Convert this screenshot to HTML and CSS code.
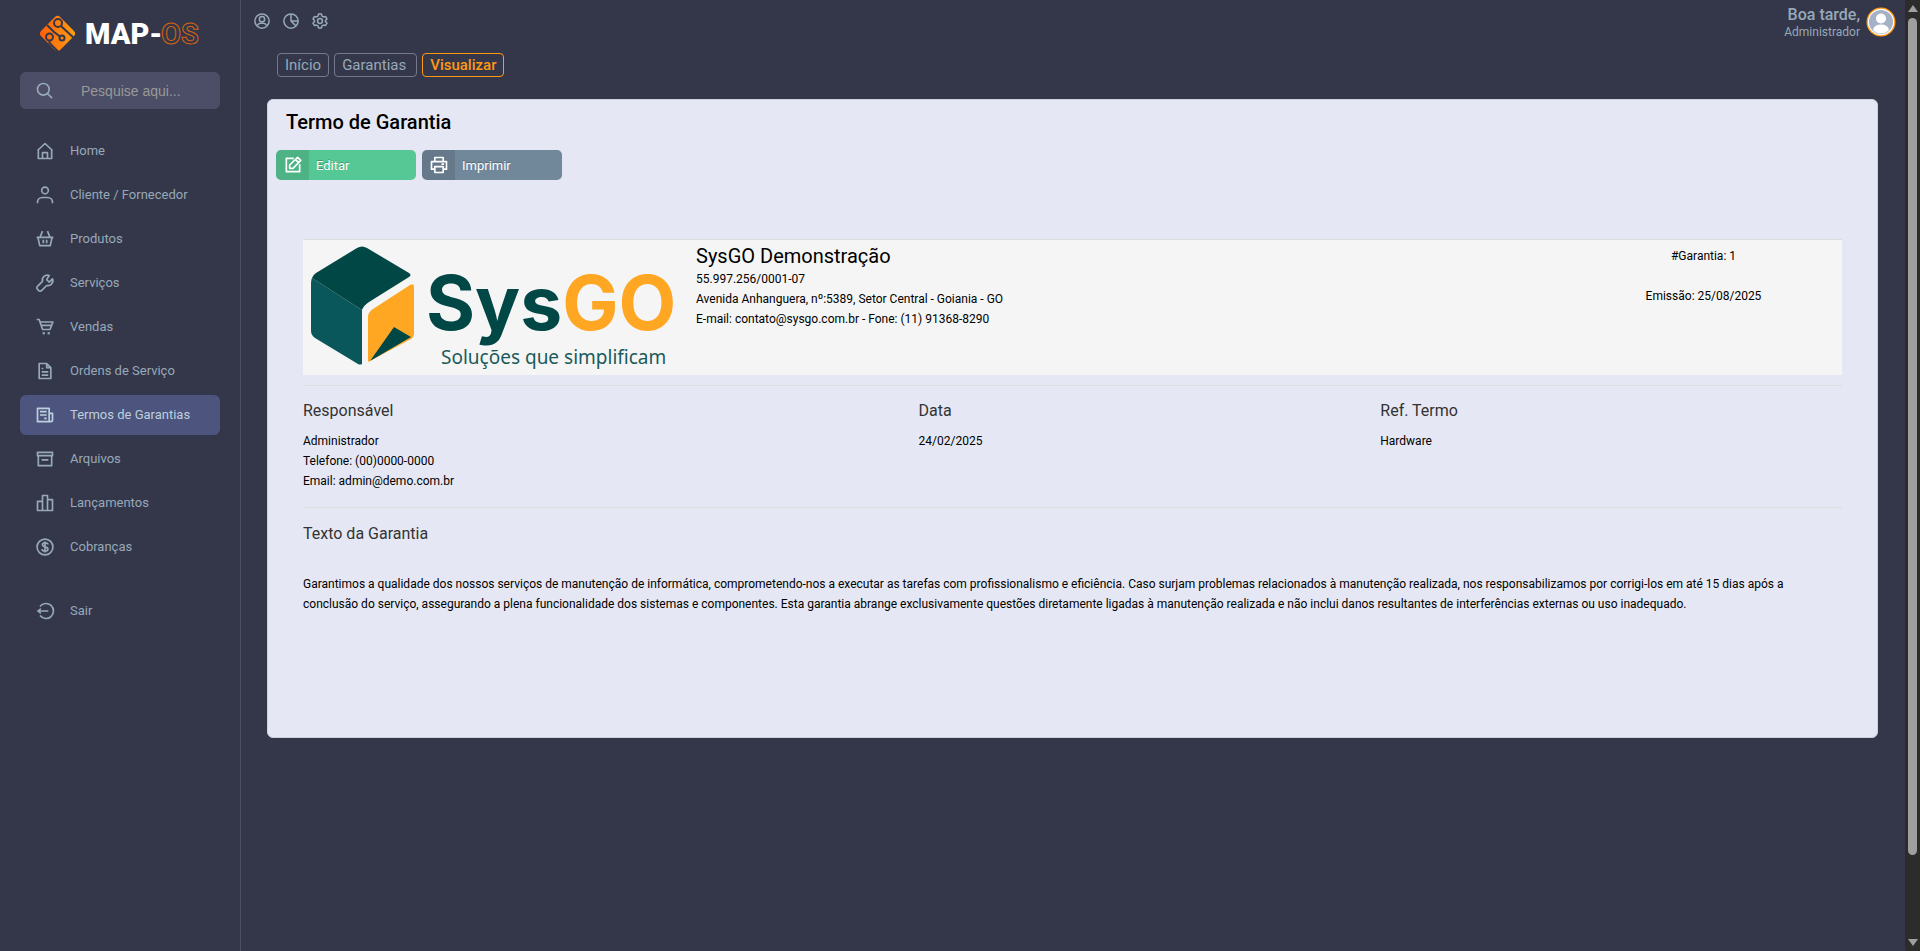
FILE: index.html
```html
<!DOCTYPE html>
<html lang="pt-BR">
<head>
<meta charset="utf-8">
<title>Map-OS - Termo de Garantia</title>
<link rel="stylesheet" href="styles.css">
</head>
<body>
<div class="app">
  <aside class="sidebar">
    <a class="brand" href="#" aria-label="Map-OS">
      <svg width="170" height="40" viewBox="0 0 170 40">
        <defs><linearGradient id="og" x1="0" y1="1" x2="1" y2="0"><stop offset="0" stop-color="#ff5c0a"/><stop offset="1" stop-color="#ffa012"/></linearGradient></defs>
        <rect x="6" y="7" width="27" height="27" rx="4" transform="rotate(45 19.500 20.500)" fill="url(#og)"/>
        <g fill="none" stroke="#34374a" stroke-width="2">
          <circle cx="20" cy="10" r="4"/><circle cx="11.500" cy="24" r="3.500"/><circle cx="24" cy="25" r="2.500"/>
          <path d="M23 13L38 27M9 12l7 7 6 4.500M11.500 28v2l9 9"/>
        </g>
        <text x="47" y="31" class="brand-map">MAP-</text>
        <text x="123" y="31" class="brand-os">OS</text>
      </svg>
    </a>
    <label class="search">
      <svg class="ico" viewBox="0 0 24 24"><circle cx="10" cy="10" r="7"/><path d="M15 15l5.500 5.500"/></svg>
      <input type="search" placeholder="Pesquise aqui..." aria-label="Pesquisar">
    </label>
    <nav class="menu">
      <a href="#"><svg class="ico" viewBox="0 0 24 24"><path d="M3 11.400L12 3l9 8.400M4 11v10h16V11M9 21v-7h6v7"/></svg>Home</a>
      <a href="#"><svg class="ico" viewBox="0 0 24 24"><circle cx="12" cy="6.500" r="4"/><path d="M3 22v-1c0-3.500 2.500-6 6-6h6c3.500 0 6 2.500 6 6v1"/></svg>Cliente / Fornecedor</a>
      <a href="#"><svg class="ico" viewBox="0 0 24 24"><path d="M2 10h20M3.500 10l2.200 10h12.600l2.200-10M6 10l3-7.500M18 10l-3-7.500M10 13v4M14 13v4"/></svg>Produtos</a>
      <a href="#"><svg class="ico" viewBox="0 0 24 24"><path d="M17 3a6 6 0 0 0-8 7l-5.800 5.800a2.500 2.500 0 0 0 0 4l1 1a2.500 2.500 0 0 0 4 0L14 15a6 6 0 0 0 7-8l-4 4-2-2-1-1z"/></svg>Serviços</a>
      <a href="#"><svg class="ico" viewBox="0 0 24 24"><path d="M2 3h3l4 12h9l3.500-9H6M7 10h13"/><circle cx="10.500" cy="19.500" r=".6"/><circle cx="16.500" cy="19.500" r=".6"/></svg>Vendas</a>
      <a href="#"><svg class="ico" viewBox="0 0 24 24"><path d="M14 3H5v18h14V8zM14 3v5h5M8 9h2M8 13h8M8 17h8"/></svg>Ordens de Serviço</a>
      <a href="#" class="active"><svg class="ico" viewBox="0 0 24 24"><path d="M3 4h14v16H3zM17 10h4v8q0 2-2 2h-2M6 8h8M6 12h8M11 16h3"/></svg>Termos de Garantias</a>
      <a href="#"><svg class="ico" viewBox="0 0 24 24"><path d="M3 4h18v4H3zM4 8v12h16V8M8 13h8"/></svg>Arquivos</a>
      <a href="#"><svg class="ico" viewBox="0 0 24 24"><path d="M3 10h6v11H3zM9 3h6v18H9zM15 8h6v13h-6z"/></svg>Lançamentos</a>
      <a href="#"><svg class="ico" viewBox="0 0 24 24"><circle cx="12" cy="12" r="9.500"/><path d="M15.500 9c0-1.500-1.500-2-3.500-2s-3 1-3 2.200c0 3.300 6.500 2 6.500 5.300 0 1.500-1.500 2.500-3.500 2.500s-3.500-1-3.500-2.500M12 5.500v13"/></svg>Cobranças</a>
      <a href="#" class="exit"><svg class="ico" viewBox="0 0 24 24"><path d="M6 6.500a9 9 0 1 1 0 11M7 12h9"/><path class="solid" d="M2 12l5-4v8z"/></svg>Sair</a>
    </nav>
  </aside>
  <main class="main">
    <header class="topbar">
      <div class="tools">
        <a href="#" aria-label="Perfil"><svg class="ico small" viewBox="0 0 24 24"><circle cx="12" cy="12" r="9.500"/><circle cx="12" cy="9.500" r="3.500"/><path d="M6 18q1-3 4-3h4q3 0 4 3"/></svg></a>
        <a href="#" aria-label="Relatórios"><svg class="ico small" viewBox="0 0 24 24"><circle cx="12" cy="12" r="9.500"/><path d="M12 2.500V12h9.500M12 12l6.500 6.500"/></svg></a>
        <a href="#" aria-label="Configurações"><svg class="ico small" viewBox="0 0 24 24"><circle cx="12" cy="12" r="3.200"/><path d="M10 2.800h4l.7 2.700 2 1.100 2.600-.7 2 3.400-2 2v1.400l2 2-2 3.400-2.600-.7-2 1.100-.7 2.700h-4l-.7-2.700-2-1.100-2.600.7-2-3.400 2-2v-1.400l-2-2 2-3.400 2.600.7 2-1.100z"/></svg></a>
      </div>
      <div class="user">
        <div><strong>Boa tarde,</strong><span>Administrador</span></div>
        <svg width="30" height="30" viewBox="0 0 30 30"><circle cx="15" cy="15" r="14.500" fill="#ff9913"/><circle cx="15" cy="15" r="13.200" fill="#fff"/><circle cx="15" cy="15" r="12" fill="#a5b1c6"/><circle cx="15" cy="11.500" r="5" fill="#fff"/><path d="M7 23q1-5.500 8-5.500t8 5.500q-3.500 3.500-8 3.500t-8-3.500z" fill="#fff"/></svg>
      </div>
    </header>
    <nav class="crumbs" aria-label="Trilha">
      <a href="#">Início</a><a href="#" class="wide">Garantias</a><a href="#" class="current">Visualizar</a>
    </nav>
    <section class="panel">
      <h1>Termo de Garantia</h1>
      <div class="buttons">
        <button class="btn green"><span><svg class="ico" viewBox="0 0 24 24"><path d="M13 4H4v16h16v-9M8 16v-4L17.500 2.800l3.800 3.700L12 16zM15 5.500l3.500 3.500"/></svg></span>Editar</button>
        <button class="btn slate"><span><svg class="ico" viewBox="0 0 24 24"><path d="M7 7V3h10v4M7 17H3V8h18v9h-4M7 14h10v7H7zM15 11h3"/></svg></span>Imprimir</button>
      </div>
      <div class="sheet">
        <div class="company">
          <svg class="logo" width="378" height="134" viewBox="0 0 378 134" role="img" aria-label="SysGO Soluções que simplificam">
            <path d="M9 38L59 70V124q-2 1-4 0L12 98q-4-3-4-7V43q0-3 1-5z" fill="#0a575b"/>
            <path d="M9 38q1-3 4-5L54 8q5-3 10 0l42 25q3 2 0 4L66 62q-5 3-7 8z" fill="#004745"/>
            <path d="M65 122V77q0-5 5-8l37-24q4-2 4 2v47q0 3-3 5z" fill="#ffa722"/>
            <path d="M67 121L91 87l17 10z" fill="#004745"/>
            <text x="123" y="90" class="word"><tspan fill="#004745">Sys</tspan><tspan fill="#ffa722">GO</tspan></text>
            <text x="138" y="124" class="slogan">Soluções que simplificam</text>
          </svg>
          <div class="details"><h2>SysGO Demonstração</h2><p>55.997.256/0001-07</p><p>Avenida Anhanguera, nº:5389, Setor Central - Goiania - GO</p><p>E-mail: contato@sysgo.com.br - Fone: (11) 91368-8290</p></div>
          <div class="issue"><p>#Garantia: 1</p><p>Emissão: 25/08/2025</p></div>
        </div>
        <div class="facts">
          <div><h3>Responsável</h3><p>Administrador</p><p>Telefone: (00)0000-0000</p><p>Email: admin@demo.com.br</p></div>
          <div><h3>Data</h3><p>24/02/2025</p></div>
          <div><h3>Ref. Termo</h3><p>Hardware</p></div>
        </div>
        <div class="terms">
          <h3>Texto da Garantia</h3>
          <p>Garantimos a qualidade dos nossos serviços de manutenção de informática, comprometendo-nos a executar as tarefas com profissionalismo e eficiência. Caso surjam problemas relacionados à manutenção realizada, nos responsabilizamos por corrigi-los em até 15 dias após a conclusão do serviço, assegurando a plena funcionalidade dos sistemas e componentes. Esta garantia abrange exclusivamente questões diretamente ligadas à manutenção realizada e não inclui danos resultantes de interferências externas ou uso inadequado.</p>
        </div>
      </div>
    </section>
  </main>
  <div class="scroll" aria-hidden="true"><i class="up"></i><i class="thumb"></i><i class="down"></i></div>
</div>
</body>
</html>
```
FILE: styles.css
```css
* { box-sizing: border-box; }
body { margin: 0; background: #34374a; font: 12px/20px Roboto, sans-serif; color: #000; }
h1, h2, h3, p { margin: 0; font-weight: 400; }
a { text-decoration: none; color: #97a9b8; }
.app { display: flex; min-height: 100vh; }
.ico { width: 20px; height: 20px; flex: none; display: block; fill: none; stroke: currentColor; stroke-width: 2; stroke-linejoin: round; }
.ico.small { width: 18px; height: 18px; }
.solid { fill: currentColor; stroke: none; }

.sidebar { width: 241px; flex: none; border-right: 1px solid #4c4f62; padding: 13px 20px; }
.brand { display: block; padding-left: 18px; height: 59px; }
.brand svg { display: block; }
.brand-map { font: 900 29px Roboto, sans-serif; fill: #fff; }
.brand-os { font: 700 29px Roboto, sans-serif; fill: none; stroke: #d9630f; stroke-width: 1; }
.search { display: flex; align-items: center; height: 37px; padding-left: 15px; gap: 26px; border-radius: 6px; background: #4b4e66; color: #97a9b8; }
.search input { width: 120px; padding: 0; border: 0; background: none; outline: 0; color: #ccc; font: 14px "Liberation Sans", Arial, sans-serif; }
.search input::placeholder { color: #999; opacity: 1; }
.menu { display: flex; flex-direction: column; gap: 4px; margin-top: 22px; }
.menu a { display: flex; align-items: center; gap: 15px; height: 40px; padding-left: 15px; border-radius: 6px; font-size: 13px; }
.menu .active { background: #4d557f; color: #bdd0dc; }
.menu .exit { margin-top: 20px; }

.main { flex: 1; min-width: 0; padding: 0 27px 0 26px; }
.topbar { display: flex; justify-content: space-between; height: 44px; margin: 0 -18px 0 -14px; }
.tools { display: flex; gap: 11px; padding-top: 12px; }
.tools a { height: 18px; }
.user { display: flex; gap: 6px; padding-top: 7px; color: #97a9b8; text-align: right; }
.user strong, .user span { display: block; }
.user strong { font-size: 16px; line-height: 16px; font-weight: 500; }
.user span { line-height: 18px; }
.crumbs { display: flex; gap: 5px; margin: 9px 0 22px 10px; }
.crumbs a { height: 24px; padding: 0 7px; border: 1px solid #747a8b; border-radius: 4px; font-size: 15px; line-height: 22px; }
.crumbs .wide { padding-right: 10px; }
.crumbs .current { color: #ff9913; border-color: #ff9913; font-weight: 500; }
.panel { background: #e5e8f4; border: 1px solid #cdd0de; border-radius: 6px; min-height: 639px; }
.panel h1 { padding: 11px 18px 0; font-size: 20px; line-height: 22px; font-weight: 500; }
.buttons { display: flex; gap: 6px; padding: 17px 8px 0; }
.btn { display: flex; align-items: center; gap: 7px; width: 140px; height: 30px; padding: 0; border: 0; border-radius: 5px; overflow: hidden; color: #fff; font: 13px Roboto, sans-serif; text-shadow: 0 -1px 0 rgba(0, 0, 0, .25); }
.btn span { display: flex; align-items: center; justify-content: center; width: 33px; height: 30px; background: rgba(0, 0, 0, .1); }
.btn .ico { width: 20px; height: 20px; stroke-width: 2; }
.green { background: #56c895; }
.slate { background: #71879a; }

.sheet { padding: 59px 35px 0; }
.company { display: grid; grid-template-columns: 393px 1fr 277px; height: 136px; background: #f5f5f5; border-top: 1px solid #ddd; }
.details { padding-top: 6px; }
.details h2 { font-size: 20px; margin-bottom: 3px; }
.issue { display: flex; flex-direction: column; gap: 20px; padding-top: 6px; text-align: center; }
.word { font: 700 75px Inter, sans-serif; }
.slogan { font: 19px "Noto Sans", sans-serif; fill: #1b5a5a; }
.facts { display: grid; grid-template-columns: 40% 30% 30%; margin-top: 10px; padding: 15px 0 16px; border-top: 1px solid #ddd; }
h3 { font-size: 16px; color: #333; margin-bottom: 10px; }
.terms { padding-top: 16px; border-top: 1px solid #ddd; }
.terms h3 { margin-bottom: 30px; }
.terms p { padding-right: 40px; }

.scroll { display: flex; flex-direction: column; align-items: center; width: 15px; flex: none; background: #2c2c2c; padding: 5px 0; }
.up, .down { border: 5px solid transparent; border-top: 0; border-bottom: 7px solid #9f9f9f; }
.down { border-top: 7px solid #9f9f9f; border-bottom: 0; margin-top: auto; }
.thumb { width: 9px; height: 89%; flex: none; margin-top: 6px; border-radius: 5px; background: #9f9f9f; }
```
